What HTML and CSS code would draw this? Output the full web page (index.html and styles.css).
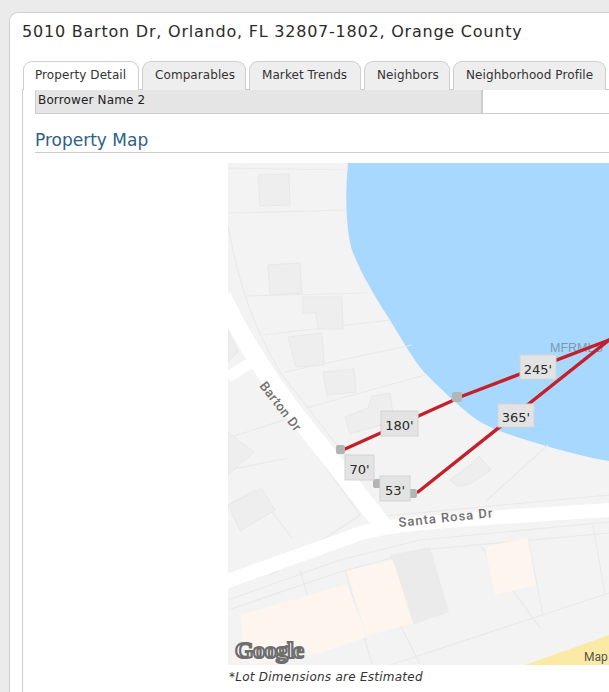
FILE: index.html
```html
<!DOCTYPE html>
<html lang="en">
<head>
<meta charset="utf-8">
<title>5010 Barton Dr</title>
<link rel="stylesheet" href="styles.css">
</head>
<body>
<main class="card">
  <h1 class="title">5010 Barton Dr, Orlando, FL 32807-1802, Orange County</h1>
  <nav class="tabs">
    <a class="tab tab-active">Property Detail</a>
    <a class="tab">Comparables</a>
    <a class="tab">Market Trends</a>
    <a class="tab">Neighbors</a>
    <a class="tab">Neighborhood Profile</a>
    <a class="tab tab-more"></a>
  </nav>
  <section class="panel">
    <div class="row">
      <div class="row-label">Borrower Name 2</div>
      <div class="row-value"></div>
    </div>
    <h2 class="section-title">Property Map</h2>
    <figure class="map-figure">
      <svg class="map" viewBox="228 163 381 502" width="381" height="502" xmlns="http://www.w3.org/2000/svg">
        <rect x="228" y="163" width="381" height="502" fill="#f3f3f3"/>
        <!-- water -->
        <path d="M348 163 C345 195 346 225 351 247 C358 268 372 292 388 317 C400 336 412 358 424 372 C440 388 456 404 473 417 C490 430 520 438 553 448 C572 453 590 458 609 461 L609 163 Z" fill="#a8d8fe"/>
        <!-- lot lines -->
        <g fill="none" stroke="#e9e9e9" stroke-width="1.1">
          <path d="M228 168 L348 170"/>
          <path d="M228 213 L346 210"/>
          <path d="M228 226 C238 280 252 325 280 372 L350 462"/>
          <path d="M246 296 L368 293"/>
          <path d="M263 335 L390 320"/>
          <path d="M285 372 L412 345"/>
          <path d="M306 408 L425 375"/>
          <path d="M228 438 L290 418 L360 515 L270 575"/>
          <path d="M228 470 L288 458"/>
          <path d="M228 505 L255 490 L292 538"/>
          <path d="M228 575 L300 548"/>
          <path d="M228 600 L340 560 L420 540 L609 522"/>
          <path d="M228 610 L340 572 L420 550 L609 533"/>
          <path d="M300 570 L312 610"/>
          <path d="M480 545 L540 628"/>
          <path d="M345 570 L372 664"/>
          <path d="M528 538 L543 615"/>
          <path d="M593 525 L605 595"/>
          <path d="M390 665 L609 593"/>
          <path d="M487 500 L548 445"/>
          <path d="M385 516 L609 495"/>
          <path d="M400 625 L420 664"/>
        </g>
        <!-- buildings -->
        <g fill="#eeeeee" stroke="#e8e8e8">
          <path d="M258 175 L289 174 L290 205 L260 206 Z"/>
          <path d="M268 265 L300 263 L302 293 L270 295 Z"/>
          <path d="M303 297 L342 297 L343 329 L318 329 L316 313 L303 313 Z"/>
          <path d="M288 337 L322 333 L324 365 L296 367 Z"/>
          <path d="M323 372 L354 369 L356 392 L327 395 Z"/>
          <path d="M345 417 L368 408 L372 396 L390 393 L393 415 L381 425 L350 434 Z"/>
          <path d="M228 432 L254 452 L228 475 Z"/>
          <path d="M228 505 L262 489 L275 510 L240 531 Z"/>
          <path d="M450 480 L470 465 L479 456 L491 470 L470 484 L458 486 Z"/>
          <path d="M228 330 L238 352 L228 362 Z"/>
        </g>
        <path d="M390 555 L430 547 L449 612 L413 625 Z" fill="#ebebeb"/>
        <!-- commercial -->
        <g fill="#fdf5ee">
          <path d="M240 615 L347 584 L367 637 L320 653 L250 665 L243 640 Z"/>
          <path d="M347 571 L393 560 L413 623 L367 636 Z"/>
          <path d="M485 547 L528 538 L536 585 L495 595 Z"/>
        </g>
        <path d="M525 665 L609 635 L609 665 Z" fill="#fbeaa6"/>
        <!-- roads -->
        <g fill="none" stroke="#ffffff" stroke-linecap="butt">
          <path d="M222 296 C238 330 262 372 300 420 L385 528" stroke-width="18"/>
          <path d="M228 377 L252 362" stroke-width="11"/>
          <path d="M222 583 L350 537 C378 525 420 522 609 510" stroke-width="14"/>
        </g>
        <!-- street names -->
        <text class="street" transform="translate(259 386) rotate(52)">Barton Dr</text>
        <text class="street street-wide" transform="translate(399 527) rotate(-6)">Santa Rosa Dr</text>
        <!-- watermark -->
        <text class="watermark" x="550" y="352">MFRMLS</text>
        <!-- measure lines -->
        <g fill="none" stroke="#c4202c" stroke-width="3.4" stroke-linecap="round">
          <path d="M345 449 L454 400"/>
          <path d="M460 397 L609 340"/>
          <path d="M418 492 L609 340"/>
        </g>
        <!-- vertices -->
        <g fill="#b4b4b4">
          <rect x="336" y="445" width="9" height="9" rx="2"/>
          <rect x="373" y="479" width="9" height="9" rx="2"/>
          <rect x="408" y="489" width="9" height="9" rx="2"/>
          <rect x="452" y="392" width="10" height="10" rx="2"/>
        </g>
        <!-- dimension labels -->
        <g class="dims">
          <rect x="381" y="411" width="37" height="25"/><text x="399.5" y="430">180'</text>
          <rect x="345" y="455" width="29" height="25"/><text x="359.5" y="474">70'</text>
          <rect x="380" y="476" width="30" height="25"/><text x="395" y="495">53'</text>
          <rect x="520" y="355" width="36" height="24"/><text x="538" y="374">245'</text>
          <rect x="498" y="404" width="36" height="23"/><text x="516" y="422">365'</text>
        </g>
        <!-- attribution -->
        <text class="google" x="235" y="658">Google</text>
        <text class="map-data" x="584" y="661">Map</text>
      </svg>
      <figcaption class="caption">*Lot Dimensions are Estimated</figcaption>
    </figure>
  </section>
</main>
</body>
</html>
```

FILE: styles.css
```css
html, body {
  margin: 0;
  height: 692px;
  overflow: hidden;
}
body {
  background: #ebebeb;
  font-family: "DejaVu Sans", Verdana, sans-serif;
  color: #222;
  padding-top: 12px;
  box-sizing: border-box;
}
.card {
  margin-left: 9px;
  width: 600px;
  height: 680px;
  overflow: hidden;
  background: #fff;
  border: 1px solid #cfcfcf;
  border-right: 0;
  border-bottom: 0;
  border-radius: 9px 0 0 0;
  box-sizing: border-box;
  padding: 0 0 0 12px;
}
.title {
  margin: 0;
  padding-top: 8px;
  height: 48px;
  box-sizing: border-box;
  font-size: 16px;
  line-height: 22px;
  font-weight: normal;
  color: #2b2b2b;
  letter-spacing: 0.78px;
  white-space: nowrap;
}
.tabs {
  display: flex;
  gap: 3px;
  height: 29px;
  border-bottom: 1px solid #ccc;
  box-sizing: border-box;
  padding-left: 1px;
}
.tab {
  box-sizing: border-box;
  flex: none;
  height: 29px;
  padding: 5px 12px 0;
  font-size: 12px;
  line-height: 16px;
  letter-spacing: 0.08px;
  color: #333;
  background: #eeeeee;
  border: 1px solid #cfcfcf;
  border-bottom: 0;
  border-radius: 9px 9px 0 0;
  white-space: nowrap;
}
.tab:nth-child(2) { width: 104px; }
.tab:nth-child(3) { width: 112px; }
.tab:nth-child(4) { width: 86px; }
.tab:nth-child(5) { width: 153px; }
.tab-active {
  width: 116px;
  padding-left: 11px;
  padding-right: 0;
  background: #fff;
}
.tab-more { width: 60px; }
.panel {
  border-left: 1px solid #cfcfcf;
  padding-left: 12px;
  height: 640px;
}
.row {
  display: flex;
  height: 24px;
  border-bottom: 1px solid #ccc;
  box-sizing: border-box;
  font-size: 12px;
  line-height: 20px;
}
.row-label {
  width: 448px;
  background: #e5e5e5;
  border-left: 1px solid #ccc;
  border-right: 2px solid #ccc;
  padding-left: 2px;
  box-sizing: border-box;
  letter-spacing: 0.15px;
  color: #222;
}
.row-value { flex: 1; }
.section-title {
  margin: 16px 0 0;
  height: 22px;
  font-size: 17px;
  line-height: 20px;
  font-weight: normal;
  color: #2e6185;
  border-bottom: 1px solid #ccc;
  box-sizing: content-box;
}
.map-figure {
  margin: 10px 0 0 193px;
}
.map {
  display: block;
}
.caption {
  margin-top: 5px;
  font-size: 12px;
  line-height: 15px;
  font-style: italic;
  letter-spacing: 0.25px;
  color: #333;
  padding-left: 1px;
}
.street {
  font-family: "Roboto", sans-serif;
  font-size: 13px;
  font-weight: 500;
  fill: #707070;
  letter-spacing: 0.4px;
}
.street-wide {
  letter-spacing: 1px;
}
.watermark {
  font-family: "Liberation Sans", sans-serif;
  font-size: 12.5px;
  fill: #7d9ab3;
}
.dims rect {
  fill: #e3e3e3;
  stroke: #d4d4d4;
  stroke-width: 1;
}
.dims text {
  font-family: "DejaVu Sans", sans-serif;
  font-size: 13px;
  fill: #2a2a2a;
  text-anchor: middle;
}
.google {
  font-family: "Liberation Serif", serif;
  font-size: 24px;
  font-weight: bold;
  fill: #ffffff;
  stroke: #6e6e6e;
  stroke-width: 2.2px;
  letter-spacing: -0.6px;
}
.map-data {
  font-family: "Roboto", sans-serif;
  font-size: 12px;
  fill: #555;
}
```
